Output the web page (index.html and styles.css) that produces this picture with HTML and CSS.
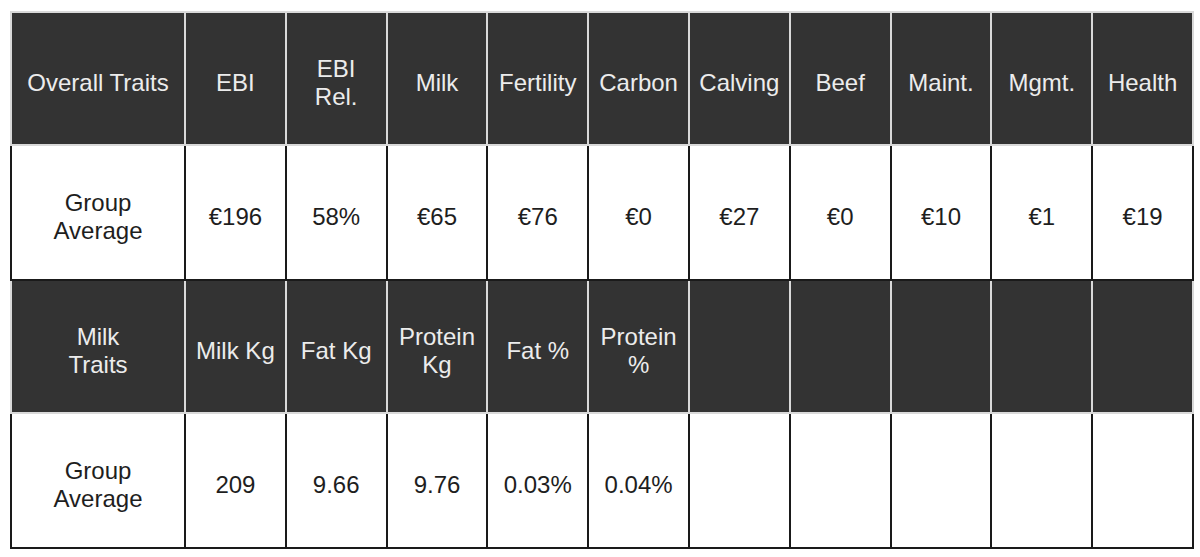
FILE: index.html
```html
<!DOCTYPE html>
<html lang="en">
<head>
<meta charset="utf-8">
<title>Group Average Traits</title>
<link rel="stylesheet" href="styles.css">
</head>
<body>
<table class="traits">
  <colgroup>
    <col class="col-label">
    <col><col><col><col><col><col><col><col><col><col>
  </colgroup>
  <tbody>
    <tr class="head-row">
      <th>Overall Traits</th>
      <th>EBI</th>
      <th>EBI<br>Rel.</th>
      <th>Milk</th>
      <th>Fertility</th>
      <th>Carbon</th>
      <th>Calving</th>
      <th>Beef</th>
      <th>Maint.</th>
      <th>Mgmt.</th>
      <th>Health</th>
    </tr>
    <tr class="data-row">
      <td>Group<br>Average</td>
      <td>€196</td>
      <td>58%</td>
      <td>€65</td>
      <td>€76</td>
      <td>€0</td>
      <td>€27</td>
      <td>€0</td>
      <td>€10</td>
      <td>€1</td>
      <td>€19</td>
    </tr>
    <tr class="head-row">
      <th>Milk<br>Traits</th>
      <th>Milk Kg</th>
      <th>Fat Kg</th>
      <th>Protein<br>Kg</th>
      <th>Fat %</th>
      <th>Protein<br>%</th>
      <th></th>
      <th></th>
      <th></th>
      <th></th>
      <th></th>
    </tr>
    <tr class="data-row">
      <td>Group<br>Average</td>
      <td>209</td>
      <td>9.66</td>
      <td>9.76</td>
      <td>0.03%</td>
      <td>0.04%</td>
      <td></td>
      <td></td>
      <td></td>
      <td></td>
      <td></td>
    </tr>
  </tbody>
</table>
</body>
</html>
```
FILE: styles.css
```css
html, body {
  margin: 0;
  padding: 0;
  background: #ffffff;
}

body {
  font-family: "Liberation Sans", Arial, sans-serif;
}

.traits {
  margin: 11px 0 0 10px;
  width: 1184px;
  table-layout: fixed;
  border-collapse: collapse;
  font-size: 24px;
  line-height: 28px;
}

.col-label {
  width: 174px;
}

.traits th,
.traits td {
  text-align: center;
  vertical-align: middle;
  padding: 8px 1px 0;
  font-weight: normal;
  white-space: nowrap;
}

.head-row {
  height: 133px;
}

.data-row {
  height: 135px;
}

.traits th {
  background: #333333;
  color: #ececec;
  border: 2px solid #d9d9d9;
}

.traits td {
  background: #ffffff;
  color: #1e1e1e;
  border: 2px solid #1a1a1a;
}
```
